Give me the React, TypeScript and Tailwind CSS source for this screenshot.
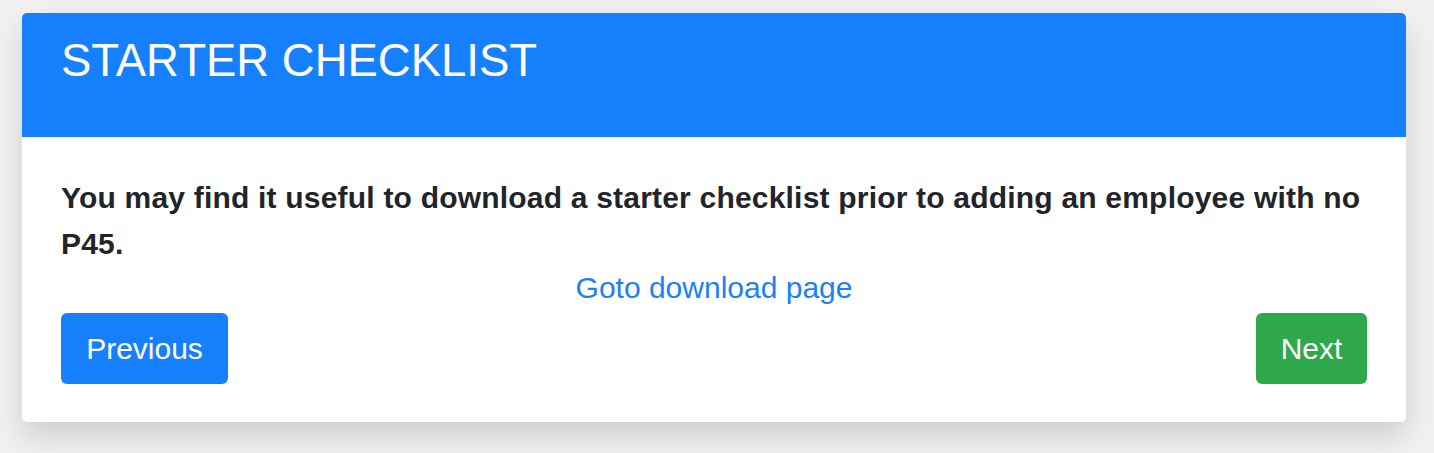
import React from "react";

export default function App() {
  return (
    <div
      className="w-[1434px] h-[453px] bg-[#f1f1f1] pt-[13px] pl-[22px]"
      style={{ fontFamily: '"Liberation Sans", Arial, sans-serif' }}
    >
      <div className="w-[1384px] h-[409px] bg-white rounded-[5px] overflow-hidden shadow-[0_14px_30px_rgba(0,0,0,0.15)] flex flex-col">
        <div className="h-[124px] bg-[#167ffc] px-[39px] pt-[22px]">
          <h1 className="text-[45.5px] leading-[52px] text-white font-normal">STARTER CHECKLIST</h1>
        </div>
        <div className="px-[39px] pt-[38px] flex flex-col">
          <p className="text-[30px] leading-[46px] font-bold text-[#212529] tracking-[0.2px]">
            You may find it useful to download a starter checklist prior to adding an employee with no P45.
          </p>
          <div className="text-center mt-[4px] leading-[34px]">
            <a className="text-[30px] leading-[34px] text-[#1a80fb]" href="#">Goto download page</a>
          </div>
          <div className="flex justify-between mt-[3px]">
            <button className="h-[71px] w-[167px] rounded-[6px] bg-[#167ffc] text-white text-[30px]">Previous</button>
            <button className="h-[71px] w-[111px] rounded-[6px] bg-[#2ea84a] text-white text-[30px]">Next</button>
          </div>
        </div>
      </div>
    </div>
  );
}
